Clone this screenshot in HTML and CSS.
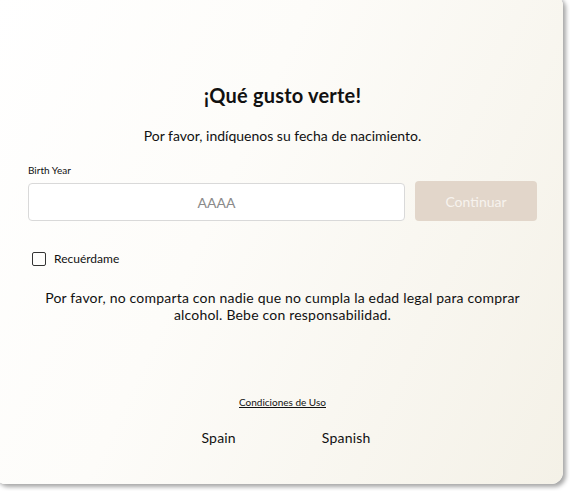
FILE: index.html
```html
<!DOCTYPE html>
<html lang="es">
<head>
<meta charset="utf-8">
<link rel="stylesheet" href="styles.css">
</head>
<body>
<div class="card">
  <h1 class="title">¡Qué gusto verte!</h1>
  <p class="subtitle">Por favor, indíquenos su fecha de nacimiento.</p>
  <label class="label" for="year">Birth Year</label>
  <div class="row">
    <input id="year" class="input" type="text" placeholder="AAAA">
    <button class="btn">Continuar</button>
  </div>
  <div class="remember">
    <span class="box"></span>
    <span class="remember-text">Recuérdame</span>
  </div>
  <p class="notice">Por favor, no comparta con nadie que no cumpla la edad legal para comprar alcohol. Bebe con responsabilidad.</p>
  <a class="terms" href="#">Condiciones de Uso</a>
  <div class="locale">
    <span>Spain</span>
    <span>Spanish</span>
  </div>
</div>
</body>
</html>
```

FILE: styles.css
```css
html, body {
  margin: 0;
  padding: 0;
  background: #ffffff;
  overflow: hidden;
}
body {
  font-family: "Lato", "Liberation Sans", sans-serif;
  color: #111111;
  width: 570px;
  height: 491px;
}
.card {
  margin: -6px 0 0 -6px;
  width: 569px;
  height: 490px;
  box-sizing: border-box;
  border-radius: 12px;
  background: linear-gradient(115deg, #ffffff 0%, #fdfcf9 40%, #f4f1e7 100%);
  box-shadow: 3px 3px 4px rgba(0,0,0,0.35);
  padding: 89px 26px 0 34px;
  display: flex;
  flex-direction: column;
  align-items: center;
}
.title {
  margin: 0;
  font-size: 20px;
  line-height: 24px;
  font-weight: 700;
  letter-spacing: 0.2px;
}
.subtitle {
  margin: 20px 0 0;
  font-size: 14px;
  line-height: 18px;
}
.label {
  align-self: stretch;
  margin-top: 19px;
  font-size: 10px;
  line-height: 12px;
}
.row {
  align-self: stretch;
  display: flex;
  align-items: flex-end;
  gap: 10px;
  margin-top: 5px;
}
.input {
  flex: 1;
  height: 38px;
  box-sizing: border-box;
  border: 1px solid #d9d9d9;
  border-radius: 4px;
  background: #fff;
  text-align: center;
  font-family: inherit;
  font-size: 14px;
  color: #222;
}
.input::placeholder { color: #8a8a8a; }
.btn {
  width: 122px;
  height: 40px;
  border: none;
  border-radius: 4px;
  background: #e2d6ca;
  color: #f7f3ee;
  font-family: inherit;
  font-size: 14px;
}
.remember {
  align-self: stretch;
  display: flex;
  align-items: center;
  gap: 8px;
  margin-top: 30px;
  padding-left: 4px;
}
.box {
  width: 14px;
  height: 14px;
  box-sizing: border-box;
  border: 1.5px solid #333;
  border-radius: 2px;
}
.remember-text {
  font-size: 12px;
  line-height: 16px;
}
.notice {
  margin: 22px 0 0;
  font-size: 14px;
  line-height: 17px;
  letter-spacing: 0.2px;
  text-align: center;
}
.terms {
  margin-top: 73px;
  font-size: 10px;
  line-height: 12px;
  color: #111111;
  text-decoration: underline;
}
.locale {
  display: flex;
  gap: 86px;
  margin-top: 21px;
  padding-left: 7px;
  font-size: 14px;
  line-height: 18px;
  letter-spacing: 0.2px;
}
```
